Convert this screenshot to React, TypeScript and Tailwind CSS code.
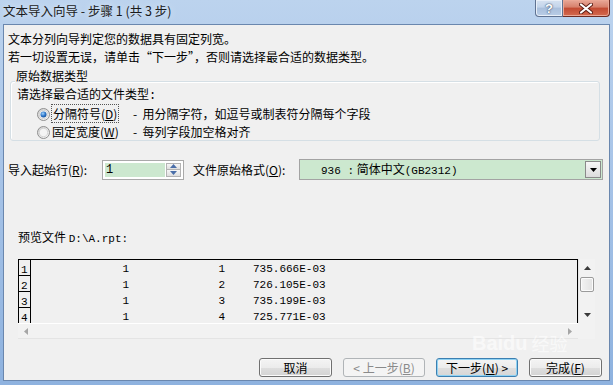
import React from "react";

const CJK = "font-['Noto_Sans_CJK_SC','Liberation_Sans',sans-serif]";
const MONO = "font-['Liberation_Mono','Noto_Sans_CJK_SC',monospace]";

const ROWS = [
  ["1", "1", "735.666E-03"],
  ["1", "2", "726.105E-03"],
  ["1", "3", "735.199E-03"],
  ["1", "4", "725.771E-03"],
];

const BTN =
  "flex h-[19px] items-center justify-center rounded-[3px] border text-[12px] leading-[15px]";

function Key({ k }: { k: string }) {
  return (
    <>
      (<span className="underline underline-offset-1">{k}</span>)
    </>
  );
}

function Radio({ checked }: { checked?: boolean }) {
  return (
    <svg width="13" height="13" viewBox="0 0 13 13" className="shrink-0">
      <defs>
        <linearGradient id="radio-bg" x1="0" y1="0" x2="1" y2="1">
          <stop offset="0" stopColor="#cfcfcf" />
          <stop offset="1" stopColor="#fbfbfb" />
        </linearGradient>
        <radialGradient id="radio-dot" cx="0.4" cy="0.35" r="0.7">
          <stop offset="0" stopColor="#9fd3fb" />
          <stop offset="0.6" stopColor="#2b73c8" />
          <stop offset="1" stopColor="#174f96" />
        </radialGradient>
      </defs>
      <circle cx="6.5" cy="6.5" r="6" fill="url(#radio-bg)" stroke="#8f8f8f" />
      <circle cx="6.5" cy="6.5" r="4.2" fill="#f4f4f4" stroke="#c4c4c4" strokeWidth="0.6" />
      {checked && <circle cx="6.5" cy="6.5" r="3" fill="url(#radio-dot)" />}
    </svg>
  );
}

function Triangle({ dir, color = "#000" }: { dir: "up" | "down" | "left" | "right"; color?: string }) {
  const pts = {
    up: "0,4 7,4 3.5,0",
    down: "0,0 7,0 3.5,4",
    left: "4,0 4,7 0,3.5",
    right: "0,0 0,7 4,3.5",
  }[dir];
  const vertical = dir === "up" || dir === "down";
  return (
    <svg width={vertical ? 7 : 4} height={vertical ? 4 : 7} viewBox={vertical ? "0 0 7 4" : "0 0 4 7"}>
      <polygon points={pts} fill={color} />
    </svg>
  );
}

function TitleBar() {
  return (
    <div className="flex h-[24px] items-start justify-between pl-[3px] pr-[3px]">
      <span className="mt-[3px] text-[12.5px] leading-[16px] text-[#1b1b1b] [text-shadow:0_0_6px_#e6f0fb]">
        文本导入向导 - 步骤 1 (共 3 步)
      </span>
      <div className="flex">
        <div className="flex h-[17px] w-[28px] items-center justify-center rounded-bl-[4px] border border-t-0 border-[#5f7291] bg-[linear-gradient(#d6e2f1_0%,#c3d4ea_45%,#a9bfdc_50%,#b9cde6_100%)] shadow-[inset_0_0_0_1px_#e8eff8]">
          <span className="font-['Liberation_Sans',sans-serif] text-[13px] font-bold leading-[13px] text-white [text-shadow:0_0_1px_#3b4f6e,0_0_2px_#3b4f6e]">
            ?
          </span>
        </div>
        <div className="flex h-[17px] w-[47px] items-center justify-center rounded-br-[4px] border border-t-0 border-l-0 border-[#6c2a22] bg-[linear-gradient(#e8a898_0%,#d7806b_45%,#c24a32_50%,#d46a4f_100%)] shadow-[inset_0_0_0_1px_#eba896]">
          <svg width="14" height="11" viewBox="0 0 14 11">
            <path d="M2 1.5 L12 9.5 M12 1.5 L2 9.5" stroke="#5a1c14" strokeWidth="4" strokeLinecap="round" />
            <path d="M2 1.5 L12 9.5 M12 1.5 L2 9.5" stroke="#fff" strokeWidth="2.2" strokeLinecap="round" />
          </svg>
        </div>
      </div>
    </div>
  );
}

function Spin() {
  return (
    <div className="flex h-[20px] w-[82px] border border-[#a9a9a9] bg-white p-[2px]">
      <div className={`flex-1 bg-[#cce8cf] pl-[1px] text-[12px] leading-[14px] ${MONO}`}>1</div>
      <div className="ml-[1px] flex w-[15px] flex-col">
        <div className="flex flex-1 items-center justify-center border border-[#b3b3b3] bg-[linear-gradient(#f6f6f6,#dedede)]">
          <Triangle dir="up" color="#4a6ea8" />
        </div>
        <div className="flex flex-1 items-center justify-center border border-t-0 border-[#b3b3b3] bg-[linear-gradient(#f6f6f6,#dedede)]">
          <Triangle dir="down" color="#4a6ea8" />
        </div>
      </div>
    </div>
  );
}

function Combo() {
  return (
    <div className="flex h-[21px] w-[304px] items-center border border-[#a3a3a3] bg-[#cce8cf] p-[1px]">
      <span className="flex-1 pl-[20px] text-[12px] leading-[16px]">
        <span className={`text-[11px] ${MONO}`}>936 :</span> 简体中文<span className={`text-[11px] ${MONO}`}>(GB2312)</span>
      </span>
      <div className="flex h-[17px] w-[16px] items-center justify-center border border-[#8a8a8a] bg-[linear-gradient(#f7f7f7,#dcdcdc)]">
        <Triangle dir="down" />
      </div>
    </div>
  );
}

function Preview() {
  return (
    <div className="ml-[14px] grid h-[80px] w-[577px] grid-cols-[560px_17px] grid-rows-[64px_16px]">
      <div className={`overflow-hidden border-l border-r border-t border-black bg-[#f0f0f0] text-[11px] ${MONO}`}>
        {ROWS.map((r, i) => (
          <div key={i} className="flex h-[16px]">
            <div className="w-[12px] shrink-0 overflow-hidden border-b border-r border-black pl-[2px] leading-[20px]">
              {i + 1}
            </div>
            <div className="w-[98px] shrink-0 text-right leading-[18px]">{r[0]}</div>
            <div className="w-[96px] shrink-0 text-right leading-[18px]">{r[1]}</div>
            <div className="pl-[28px] leading-[18px]">{r[2]}</div>
          </div>
        ))}
      </div>
      <div className="flex flex-col items-center border-l border-[#e6e6e6] bg-[#f2f2f2]">
        <div className="mt-[6px] flex h-[5px] items-center">
          <Triangle dir="up" color="#3a3a3a" />
        </div>
        <div className="mt-[7px] h-[15px] w-[14px] rounded-[2px] border border-[#9b9b9b] bg-[linear-gradient(90deg,#f3f3f3,#e2e2e2)] shadow-[inset_0_0_0_1px_#fbfbfb]" />
        <div className="mt-auto mb-[6px] flex h-[5px] items-center">
          <Triangle dir="down" color="#3a3a3a" />
        </div>
      </div>
      <div className="flex items-center justify-between border-t border-b border-t-white border-b-[#e4e4e4] bg-[#f2f2f2] pl-[6px] pr-[6px]">
        <Triangle dir="left" color="#a6a6a6" />
        <Triangle dir="right" color="#a6a6a6" />
      </div>
      <div className="bg-[#f2f2f2]" />
    </div>
  );
}

export default function App() {
  return (
    <div
      className={`relative flex h-[385px] w-[613px] flex-col overflow-hidden bg-[linear-gradient(#bcd3ee_0%,#a9c5e8_40%,#8eb2df_100%)] text-black ${CJK}`}
    >
      <TitleBar />
      <div className="mx-[3px] mb-[4px] flex flex-1 flex-col border border-[#6a87ae] bg-[#f0f0f0] text-[12px] leading-[16px]">
        <p className="ml-[4px] mt-[6px]">文本分列向导判定您的数据具有固定列宽。</p>
        <p className="ml-[4px] mt-[2px]">若一切设置无误，请单击“下一步”，否则请选择最合适的数据类型。</p>

        <div className="relative ml-[6px] mt-[16px] h-[60px] w-[590px] rounded-[3px] border border-[#d5dfe5] shadow-[inset_1px_1px_0_#fff]">
          <span className="absolute -top-[13px] left-[4px] bg-[#f0f0f0] px-[1px] leading-[14px]">原始数据类型</span>
          <p className="ml-[6px] mt-[4px] leading-[15px]">
            请选择最合适的文件类型<span className={MONO}>:</span>
          </p>
          <div className="mt-[1px] flex h-[18px] items-center pl-[26px]">
            <Radio checked />
            <span className="ml-[1px] w-[82px]">
              <span className="border border-dotted border-[#555] px-[1px]">
                分隔符号<Key k="D" />
              </span>
            </span>
            <span>-&nbsp;&nbsp;用分隔字符，如逗号或制表符分隔每个字段</span>
          </div>
          <div className="flex h-[18px] items-center pl-[26px]">
            <Radio />
            <span className="ml-[2px] w-[81px]">
              固定宽度<Key k="W" />
            </span>
            <span>-&nbsp;&nbsp;每列字段加空格对齐</span>
          </div>
        </div>

        <div className="ml-[4px] mt-[18px] flex h-[21px] items-center">
          <span className="w-[94px]">
            导入起始行<Key k="R" />:
          </span>
          <Spin />
          <span className="ml-[9px] w-[106px]">
            文件原始格式<Key k="O" />:
          </span>
          <Combo />
        </div>

        <p className="ml-[14px] mt-[49px]">
          预览文件 <span className={`text-[11px] ${MONO}`}>D:\A.rpt:</span>
        </p>
        <div className="mt-[12px]">
          <Preview />
        </div>

        <div className="mr-[7px] mt-[19px] flex justify-end gap-[11px]">
          <div className={`${BTN} w-[73px] border-[#707070] bg-[linear-gradient(#f4f4f4_0%,#ececec_50%,#dfdfdf_50%,#d3d3d3_100%)] shadow-[inset_0_0_0_1px_#fbfbfb]`}>
            取消
          </div>
          <div className={`${BTN} w-[82px] border-[#b0b4b7] bg-[#f4f4f4] text-[#8a8a8a]`}>
            &lt; 上一步<Key k="B" />
          </div>
          <div className={`${BTN} w-[82px] border-[#3c7fb1] bg-[linear-gradient(#f4f4f4_0%,#ececec_50%,#dfdfdf_50%,#d6d6d6_100%)] shadow-[inset_0_0_0_1px_#8fd2f3]`}>
            下一步<Key k="N" /> &gt;
          </div>
          <div className={`${BTN} w-[73px] border-[#707070] bg-[linear-gradient(#f4f4f4_0%,#ececec_50%,#dfdfdf_50%,#d3d3d3_100%)] shadow-[inset_0_0_0_1px_#fbfbfb]`}>
            完成<Key k="F" />
          </div>
        </div>
      </div>

      {/* faint site watermark over the lower right corner */}
      <div className="pointer-events-none absolute left-[472px] top-[333px] flex items-center whitespace-nowrap font-['Liberation_Sans',sans-serif] text-[20px] font-bold leading-[20px] text-white/60">
        Baidu
        <span className={`ml-[4px] text-[18px] font-normal ${CJK}`}>经验</span>
      </div>
    </div>
  );
}
